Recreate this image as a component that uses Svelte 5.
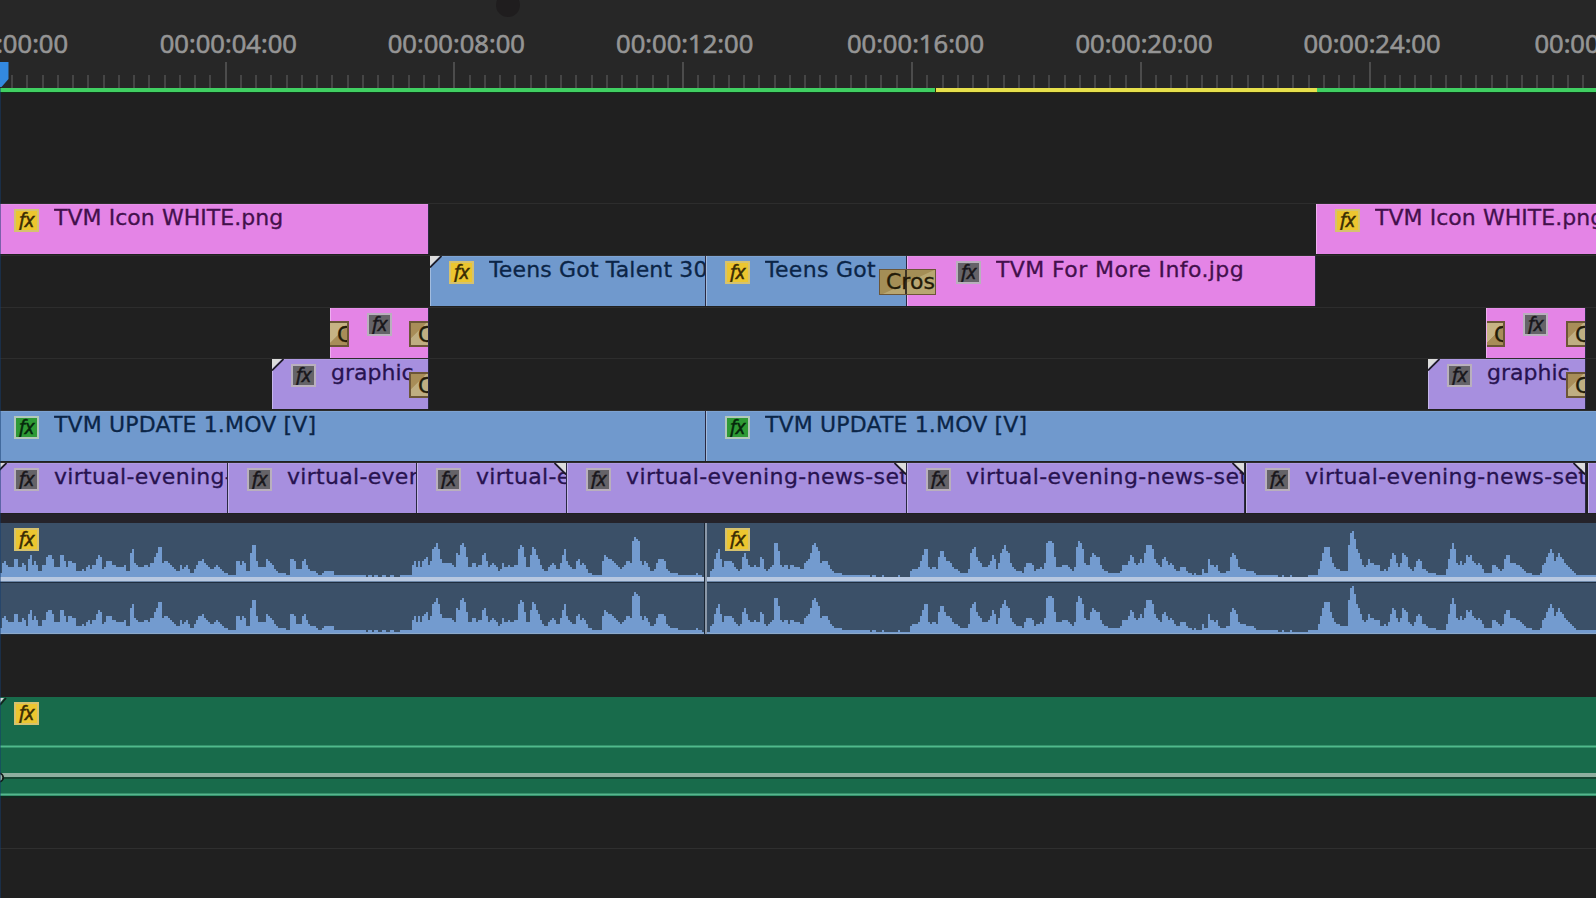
<script lang="ts">
  type Clip = {
    x: number;
    end: number;
    color: string;
    fx: string;
    label?: string;
    spacing?: number;
    pad?: number;
    fold?: string;
  };
  type Transition = { x: number; end: number; label: string; kind?: string };
  type Track = { clips: Clip[]; transitions?: Transition[] };

  const END = 1620;
  const MAJOR = 228.8;
  const centers = [-0.5, 228.3, 456.3, 684.7, 915.5, 1144, 1372, 1603];
  const timecodes = centers.map((x, i) => ({
    text: `00:00:${String(i * 4).padStart(2, '0')}:00`,
    x,
  }));
  const ticks = Array.from({ length: 106 }, (_, i) => ({
    x: Math.round(i * (MAJOR / 15) - 4.2),
    major: i % 15 === 0 && i > 0,
  }));

  const tracks: Track[] = [
    {
      clips: [
        { x: -5, end: 428, color: 'pink', fx: 'yellow', label: 'TVM Icon WHITE.png', spacing: 0.05 },
        { x: 1316, end: END, color: 'pink', fx: 'yellow', label: 'TVM Icon WHITE.png', spacing: 0.05 },
      ],
    },
    {
      clips: [
        { x: 430, end: 705, color: 'blue', fx: 'yellow', label: 'Teens Got Talent 30', spacing: 0.15, fold: 'left' },
        { x: 706, end: 906, color: 'blue', fx: 'yellow', label: 'Teens Got', spacing: 0.3 },
        { x: 907, end: 1315, color: 'pink', fx: 'gray', label: 'TVM For More Info.jpg', spacing: 0.4, pad: 49 },
      ],
      transitions: [{ x: 879, end: 936, label: 'Cros', kind: 'cross' }],
    },
    {
      clips: [
        { x: 330, end: 428, color: 'pink', fx: 'gray', pad: 37 },
        { x: 1486, end: 1585, color: 'pink', fx: 'gray', pad: 37 },
      ],
      transitions: [
        { x: 330, end: 349, label: 'C', kind: 'in' },
        { x: 409, end: 428, label: 'C', kind: 'out' },
        { x: 1487, end: 1505, label: 'C', kind: 'in' },
        { x: 1566, end: 1585, label: 'C', kind: 'out' },
      ],
    },
    {
      clips: [
        { x: 272, end: 428, color: 'purple', fx: 'gray', label: 'graphic', fold: 'left' },
        { x: 1428, end: 1585, color: 'purple', fx: 'gray', label: 'graphic', fold: 'left' },
      ],
      transitions: [
        { x: 409, end: 428, label: 'C', kind: 'out' },
        { x: 1566, end: 1585, label: 'C', kind: 'out' },
      ],
    },
    {
      clips: [
        { x: -5, end: 705, color: 'blue', fx: 'green', label: 'TVM UPDATE 1.MOV [V]', spacing: 0.15 },
        { x: 706, end: END, color: 'blue', fx: 'green', label: 'TVM UPDATE 1.MOV [V]', spacing: 0.15 },
      ],
    },
    {
      clips: [
        { x: -5, end: 227, color: 'purple', fx: 'gray', label: 'virtual-evening-', spacing: 0.3, fold: 'left' },
        { x: 228, end: 416, color: 'purple', fx: 'gray', label: 'virtual-even', spacing: 0.3 },
        { x: 417, end: 566, color: 'purple', fx: 'gray', label: 'virtual-e', spacing: 0.3, fold: 'right' },
        { x: 567, end: 906, color: 'purple', fx: 'gray', label: 'virtual-evening-news-set', spacing: 0.4, fold: 'right' },
        { x: 907, end: 1244, color: 'purple', fx: 'gray', label: 'virtual-evening-news-set', spacing: 0.4, fold: 'right' },
        { x: 1246, end: 1585, color: 'purple', fx: 'gray', label: 'virtual-evening-news-set', spacing: 0.4, fold: 'right' },
        { x: 1588, end: END, color: 'purple', fx: '' },
      ],
    },
  ];

  const gapBefore = (clips: Clip[], i: number) => clips[i].x - (i ? clips[i - 1].end : 0);

  // audio envelope, position and level in thirds of a pixel
  const envelope = [
    { at: 0, points: '0,0 6,28 12,54 18,36 26,28 40,28 44,54 52,54 56,30 62,28 70,46 74,46 76,22 84,20 88,66 94,66 98,34 106,48 112,36 118,16 124,16 128,34 136,34 142,66 158,66 162,30 178,30 182,66 194,66 196,26 204,28 206,46 226,44 232,16 246,16 250,24 256,16 262,30 268,34 272,22 276,34 286,34 294,66 304,60 308,26 316,28 322,50 336,50 340,28 346,36 352,26 366,32 378,34 382,16 388,16 394,80 402,84 404,46 410,36 428,24 432,40 440,36 446,28 450,44 462,44 468,70 474,72 476,90 486,90 488,40 500,50 508,38 522,28 530,16 538,16 544,40 548,24 556,34 566,32 568,14 576,10 582,16 590,34 596,46 610,54 614,46 626,28 634,22 644,30 652,40 660,28 670,16 684,10 700,4 708,4 710,50 720,50 724,30 730,54 734,54 736,26 744,16 750,16 754,90 760,98 766,94 768,66 774,30 794,28 800,52 808,46 816,36 824,34 826,18 838,14 858,10 868,6 872,54 884,52 888,26 906,24 910,54 918,54 922,30 930,16 948,16 960,6 974,16 1002,16 1004,5 1096,5 1100,1 1108,5 1118,1 1130,5 1140,1 1150,5 1164,1 1176,5 1188,2' },
    { at: 1200, points: '0,3 36,3 40,46 48,46 50,28 54,46 60,46 62,22 66,46 72,46 76,56 82,60 86,34 92,34 96,84 108,92 110,104 116,92 120,60 128,42 156,44 164,24 170,72 176,72 178,54 184,104 190,104 192,90 200,86 202,34 212,28 222,46 230,30 244,38 248,66 256,72 262,46 268,28 280,40 290,34 296,14 304,28 310,46 316,28 328,36 336,24 344,36 350,30 354,60 360,104 366,92 374,88 376,28 390,28 396,98 404,84 412,64 420,44 428,28 440,14 448,34 460,42 470,24 480,28 486,54 492,78 496,86 502,40 514,28 524,22 530,46 536,60 540,34 548,46 560,28 568,10 600,6 606,6 608,46 616,66 624,54 632,54 640,48 648,34 656,34 666,24 676,36 684,54 692,34 696,66 700,122 712,114 718,110 720,54 728,34 738,54 744,34 752,20 762,16 774,52 794,54 798,28 810,12 840,8 846,4 884,4 890,10 900,4 912,1 928,2 934,22 940,22 946,60 954,80 960,86 964,40 970,28 976,50 984,46 996,48 1006,30 1022,16 1028,60 1034,74 1040,54 1048,34 1058,28 1064,40 1072,28 1080,30 1082,60 1090,56 1094,28 1104,16 1112,30 1120,34 1124,104 1134,98 1138,72 1142,40 1152,28 1158,40 1166,24 1176,40 1184,28 1190,28' },
    { at: 2400, points: '0,28 8,14 12,44 24,46 32,66 38,96 44,104 52,90 60,70 62,40 72,50 82,46 90,28 104,14 116,14 130,6 206,4 212,1 222,4 236,1 250,4 262,1 290,2 300,4 308,1 328,3 332,16 340,24 350,22 360,36 368,62 376,86 384,84 386,34 394,24 402,30 414,24 418,72 428,78 434,64 438,46 448,46 460,30 470,22 484,10 506,12 510,60 518,84 524,96 530,62 540,46 552,28 564,28 570,40 578,66 584,60 588,34 594,14 600,66 608,80 612,104 618,84 630,66 634,36 646,20 670,14 678,40 698,42 704,20 716,22 722,30 732,20 738,60 740,104 758,110 764,66 768,34 780,28 790,34 800,38 812,26 824,16 828,64 834,110 846,96 852,72 854,40 866,34 872,56 880,72 890,60 900,56 904,28 918,18 934,10 962,10 966,34 974,42 978,24 984,44 994,66 1002,58 1006,34 1014,34 1022,54 1028,36 1034,66 1040,96 1052,96 1062,80 1066,46 1076,34 1086,24 1090,60 1100,54 1106,34 1114,46 1120,34 1128,16 1138,20 1146,34 1156,28 1166,12 1180,6 1186,10' },
    { at: 3588, points: '16,6 20,24 28,10 34,10 38,54 44,36 54,32 66,34 70,14 88,14 100,20 106,70 112,72 120,60 126,46 130,22 146,22 158,16 172,20 180,6 246,4 252,1 262,4 272,1 284,4 300,1 330,1 340,4 366,3 372,40 378,60 386,90 400,90 404,60 412,40 420,24 446,16 454,16 456,66 460,104 466,140 474,136 478,110 484,80 492,64 500,34 512,32 518,54 528,40 550,34 556,14 564,24 572,16 580,30 586,60 594,78 600,50 608,28 614,34 620,70 632,66 636,34 646,22 654,18 662,46 668,54 676,50 680,26 694,16 710,10 752,6 754,40 762,60 768,110 776,96 780,46 788,36 794,54 800,34 806,30 810,72 818,60 826,66 834,42 844,34 850,44 858,28 868,12 886,10 890,34 902,34 910,20 920,14 924,46 930,66 940,64 944,42 960,40 976,28 990,14 1010,8 1034,6 1040,34 1048,46 1056,70 1068,86 1074,60 1080,40 1086,74 1096,60 1110,40 1126,26 1140,10 1152,4 1210,4' },
  ].flatMap(({ at, points }) =>
    points.split(' ').map((p) => {
      const [x, level] = p.split(',').map(Number);
      return { x: (at + x) / 3, level: level / 3 };
    })
  );

  function wavePath(base: number) {
    let d = `M0 ${base + 6}`;
    let k = 0;
    for (let x = 0; x < 1596; x += 2) {
      while (k < envelope.length - 2 && envelope[k + 1].x < x + 1) k++;
      const a = envelope[k];
      const b = envelope[k + 1];
      const t = Math.min(1, Math.max(0, (x + 1 - a.x) / (b.x - a.x || 1)));
      const level = Math.round((a.level + (b.level - a.level) * t) / 2) * 2;
      d += `V${base - level}H${x + 2}`;
    }
    return d + `V${base + 6}Z`;
  }
</script>

{#snippet badge(color: string)}
  <span class="fx {color}"><i>fx</i></span>
{/snippet}

<main class="timeline">
  <header class="ruler">
    <span class="knob"></span>
    {#each timecodes as tc}
      <span class="timecode" style="left: {tc.x}px">{tc.text}</span>
    {/each}
    <svg class="ticks" width="1596" height="26" viewBox="0 0 1596 26">
      {#each ticks as tick}
        <rect x={tick.x} y={tick.major ? 0 : 13} width="2" height="26" fill={tick.major ? '#4c4c4c' : '#454545'} />
      {/each}
      <path d="M0 0H8.5V17L1.5 25H0Z" fill="#3389e0" />
    </svg>
  </header>

  <div class="render-bar">
    <span class="done"></span>
    <span class="pending"></span>
    <span class="rest"></span>
  </div>

  <section class="video">
    {#each tracks as track}
      <div class="track">
        {#each track.clips as clip, i}
          <div
            class="clip {clip.color}"
            style="margin-left: {gapBefore(track.clips, i)}px; width: {clip.end - clip.x}px; padding-left: {clip.pad ?? 19}px"
          >
            {#if clip.fx}{@render badge(clip.fx)}{/if}
            {#if clip.label}<span class="label" style="letter-spacing: {clip.spacing ?? 0}px">{clip.label}</span>{/if}
            {#if clip.fold}
              <svg class="fold {clip.fold}" width="12" height="12" viewBox="0 0 12 12">
                <path d="M0 0H10L0 10Z" fill="#dcdcdc" />
                <path d="M11.5 0L0 11.5" stroke="#1c1a24" stroke-width="1.7" />
              </svg>
            {/if}
          </div>
        {/each}
        {#each track.transitions ?? [] as tr}
          <span class="transition {tr.kind}" style="left: {tr.x}px; width: {tr.end - tr.x}px">{tr.label}</span>
        {/each}
      </div>
    {/each}
  </section>

  <section class="audio">
    <div class="channel first">
      <svg width="1596" height="54" viewBox="0 0 1596 54"><path d={wavePath(54)} fill="#739bcf" /></svg>
    </div>
    <div class="volume"></div>
    <div class="channel">
      <svg width="1596" height="50" viewBox="0 0 1596 50"><path d={wavePath(48)} fill="#739bcf" /></svg>
    </div>
    <div class="cut-line"></div>
    <div class="audio-fx one">{@render badge('yellow')}</div>
    <div class="audio-fx two">{@render badge('yellow')}</div>
  </section>

  <section class="music">
    <div class="audio-fx one">{@render badge('yellow')}</div>
    <svg width="1596" height="101" viewBox="0 0 1596 101">
      <path d="M0 49.5H1596" stroke="#50ba8c" stroke-width="2" />
      <path d="M0 78H1596" stroke="#8fae9f" stroke-width="4" />
      <path d="M0 81H1596" stroke="#14382a" stroke-width="1.6" />
      <path d="M0 97.5H1596" stroke="#55b78d" stroke-width="2" />
      <path d="M0 100H1596" stroke="#10281e" stroke-width="2" />
      <path d="M0 1H4L0 6Z" fill="#dcdcdc" />
      <path d="M6 1L0 8" stroke="#14201b" stroke-width="1.6" />
      <circle cx="-1" cy="80.5" r="4.2" fill="#9ab3a7" stroke="#101a15" stroke-width="1.8" />
    </svg>
  </section>

  <div class="empty"></div>
  <div class="playhead"></div>
</main>

<style>
  :global(body) {
    background: #202020;
    overflow: hidden;
  }

  .timeline {
    position: relative;
    width: 1596px;
    height: 898px;
    overflow: hidden;
    background: #202020;
    font-family: "DejaVu Sans", "Lucida Grande", sans-serif;
    font-size: 22px;
  }

  .ruler {
    position: relative;
    height: 88px;
    background: #272727;
    overflow: hidden;
  }

  .knob {
    position: absolute;
    left: 496px;
    top: -7px;
    width: 24px;
    height: 24px;
    border-radius: 50%;
    background: #1f1d1e;
  }

  .timecode {
    position: absolute;
    top: 26px;
    transform: translateX(-50%);
    color: #959595;
    font: 25.6px/36px "Open Sans", "Noto Sans", sans-serif;
    -webkit-text-stroke: 0.7px #959595;
    white-space: nowrap;
  }

  .ticks {
    position: absolute;
    left: 0;
    bottom: 0;
  }

  .render-bar {
    display: flex;
    height: 4px;
    box-shadow: 0 0 0 1px #0d3216;
  }

  .done {
    width: 936px;
    background: #40cf62;
  }

  .pending {
    width: 381px;
    background: #e6e04c;
    box-shadow: 0 0 0 1px #2f2d08;
  }

  .rest {
    flex: 1;
    background: #40cf62;
  }

  .video {
    padding-top: 111px;
    height: 311px;
    border-bottom: 9px solid #25232a;
  }

  .track {
    position: relative;
    display: flex;
    box-sizing: border-box;
    height: 51.8px;
    border-top: 1px solid #2d2d2d;
    overflow: hidden;
  }

  .clip {
    position: relative;
    display: flex;
    flex: none;
    box-sizing: border-box;
    height: 50px;
    overflow: hidden;
    box-shadow: inset 1px 0 rgba(255, 255, 255, 0.35), inset 0 1px rgba(255, 255, 255, 0.1), 1px 0 #2a2942;
  }

  .pink {
    background: #e484e6;
    color: #43104c;
  }

  .blue {
    background: #7099cd;
    color: #0b2547;
  }

  .purple {
    background: #a78fdf;
    color: #281350;
  }

  .fx {
    flex: none;
    box-sizing: border-box;
    width: 25px;
    height: 23px;
    margin-top: 5px;
    border: 2px solid #c9c1a8;
    text-align: center;
    color: #392b04;
    font: 20px/18px "Open Sans", sans-serif;
    letter-spacing: -0.5px;
    overflow: hidden;
  }

  .fx i {
    -webkit-text-stroke: 0.5px currentColor;
  }

  .fx.yellow {
    background: #ecc62f;
    border-color: #d6c26e;
  }

  .fx.gray {
    background: #656368;
    border-color: #b9b0bd;
    color: #18161a;
  }

  .fx.green {
    background: #2f9a35;
    border-color: #b2c8bb;
    color: #05260a;
  }

  .label {
    flex: 1;
    min-width: 0;
    margin-left: 15px;
    line-height: 27px;
    white-space: nowrap;
    overflow: hidden;
    -webkit-text-stroke: 0.3px currentColor;
  }

  .fold {
    position: absolute;
    top: 0;
  }

  .fold.left {
    left: 0;
  }

  .fold.right {
    right: 0;
    transform: scaleX(-1);
  }

  .transition {
    position: absolute;
    top: 13px;
    box-sizing: border-box;
    height: 26px;
    padding-left: 7px;
    border: 2px solid #6c5637;
    color: #231b08;
    line-height: 24px;
    overflow: hidden;
    -webkit-text-stroke: 0.3px currentColor;
  }

  /* the edit point stays visible through a centred transition */
  .transition.cross {
    background:
      linear-gradient(#3d3425, #3d3425) 25px 0 / 2px 100% no-repeat,
      linear-gradient(155deg, #a48e56 50%, #b8a671 52%);
    border-width: 1.5px;
    padding-left: 6px;
  }

  .transition.in {
    border-left: 0;
    background: linear-gradient(135deg, #c6b384 50%, #a88d58 52%);
  }

  .transition.out {
    border-right: 0;
    background: linear-gradient(135deg, #a88d58 38%, #bfae82 40%);
  }

  .audio {
    position: relative;
    height: 112px;
    background: #3b5068;
    border-bottom: 1px solid #1d2937;
    box-sizing: border-box;
  }

  .channel {
    height: 49px;
    overflow: hidden;
    border-bottom: 1px solid #8ca8c8;
  }

  .channel svg {
    display: block;
  }

  .channel.first {
    height: 54px;
    border-bottom: 0;
  }

  .volume {
    height: 4px;
    background: #b8c8e0;
    border-bottom: 1px solid #6c87a8;
    box-shadow: 0 1px #1f2d3f;
    margin-bottom: 2px;
  }

  .cut-line {
    position: absolute;
    left: 704px;
    top: 0;
    width: 1px;
    height: 111px;
    background: #1c2735;
    border-right: 2px solid #8b98a8;
  }

  .audio-fx {
    position: absolute;
    top: 0;
    display: flex;
  }

  .audio-fx.one {
    left: 14px;
  }

  .audio-fx.two {
    left: 725px;
  }

  .music {
    position: relative;
    height: 101px;
    margin-top: 62px;
    background: #186b4b;
  }

  .music svg {
    display: block;
  }

  .empty {
    height: 50px;
    border-bottom: 1px solid #2f2f2f;
  }

  .playhead {
    position: absolute;
    left: 0;
    top: 88px;
    bottom: 0;
    width: 1px;
    background: rgba(20, 60, 110, 0.5);
  }
</style>
